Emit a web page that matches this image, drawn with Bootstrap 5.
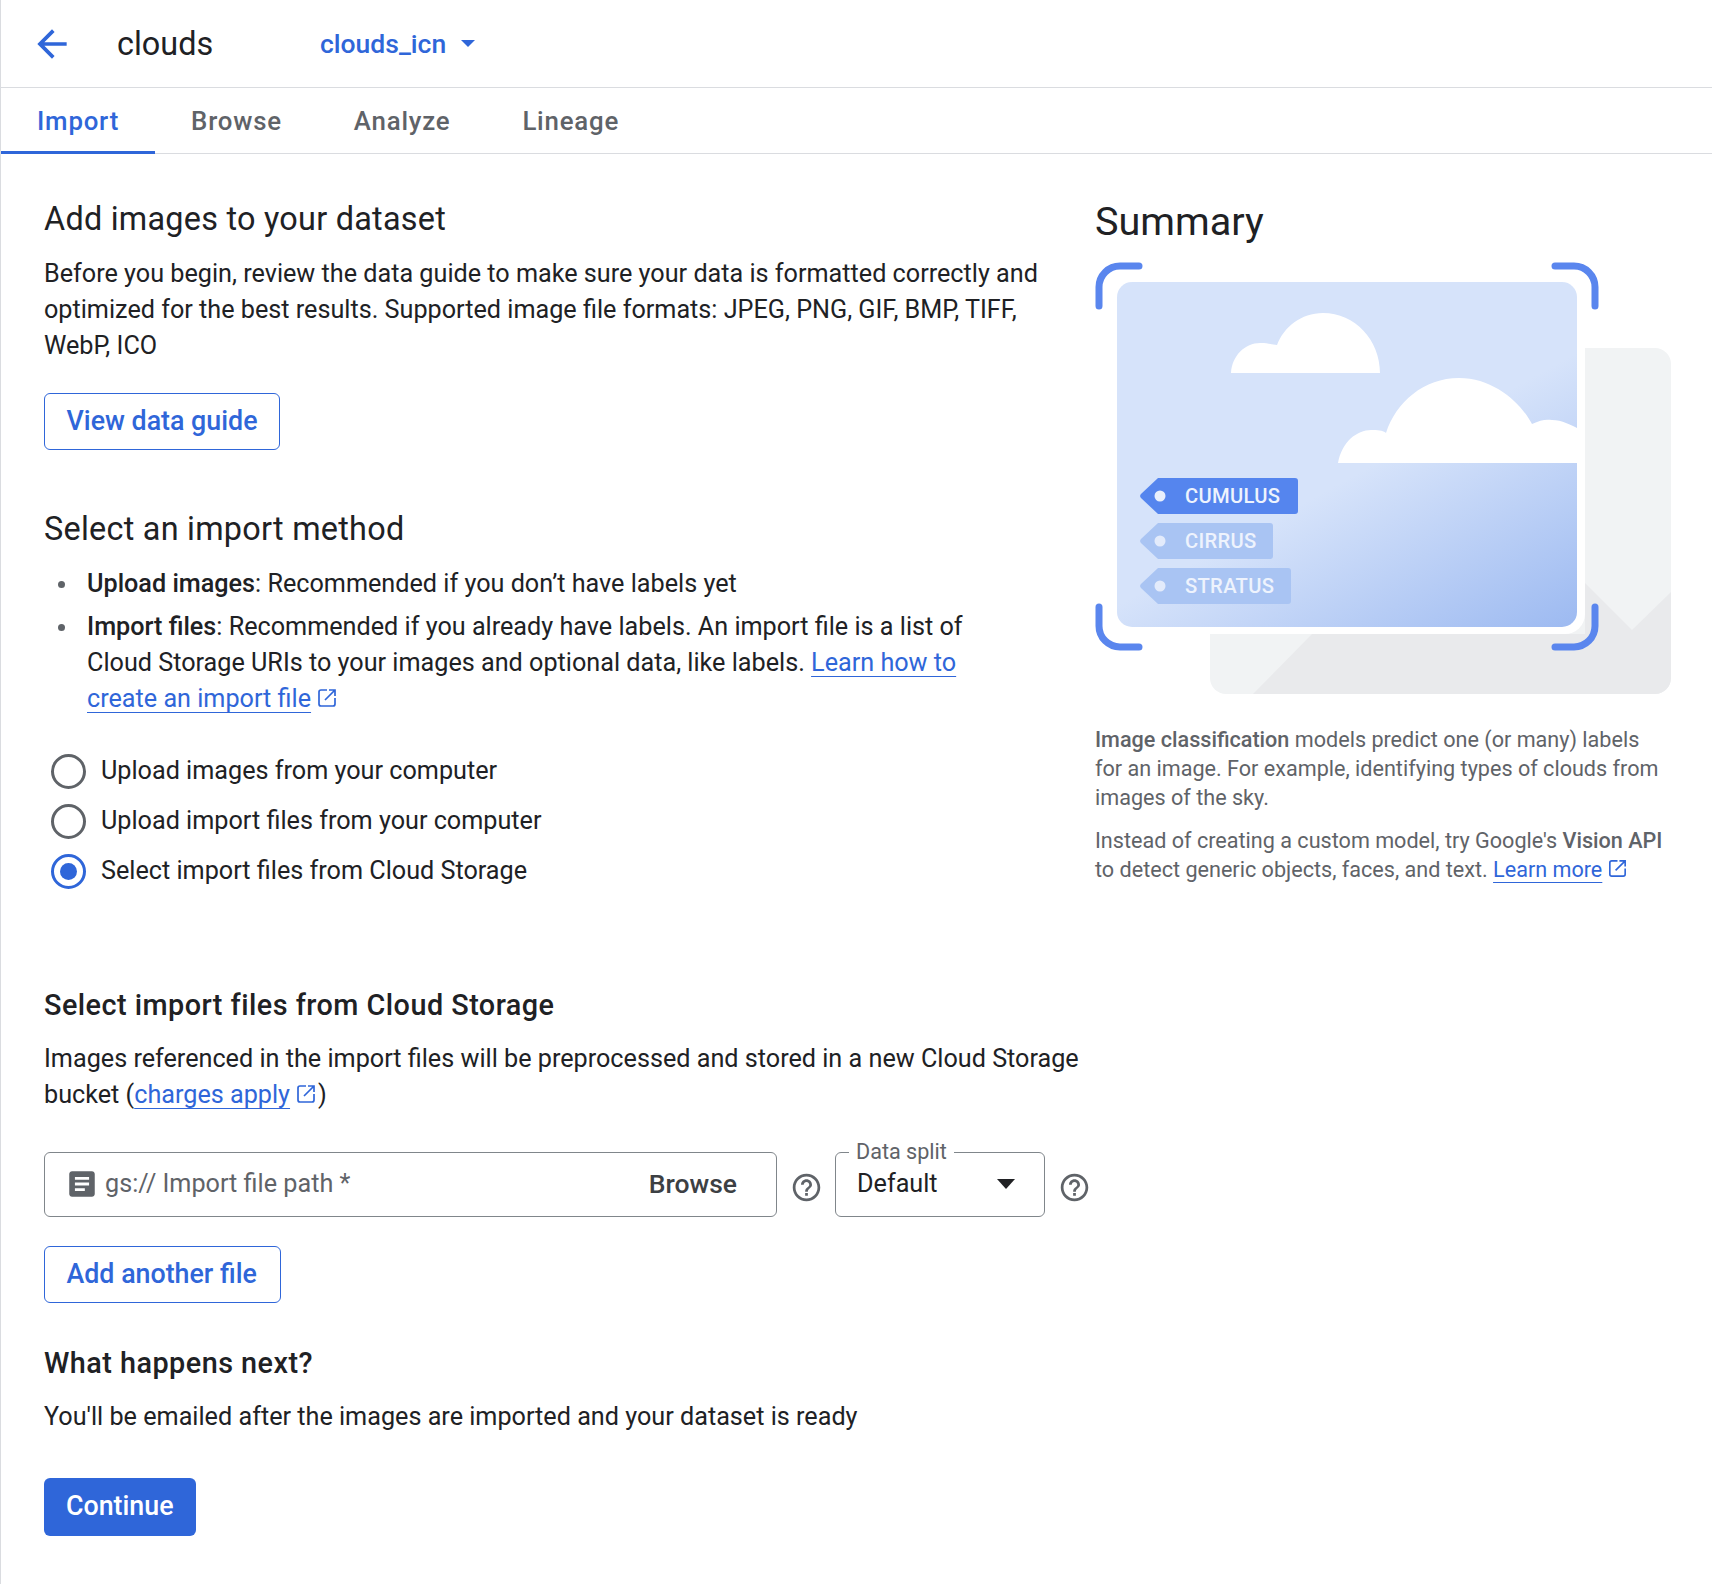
<!doctype html>
<html lang="en"><head><meta charset="utf-8"><title>clouds</title>
<link rel="stylesheet" href="https://cdn.jsdelivr.net/npm/bootstrap@5.3.0/dist/css/bootstrap.min.css">
<style>
body{font-family:Roboto,"Liberation Sans",sans-serif;font-size:25.2px;line-height:36px;color:#202124;background:#fff;margin:0}
.pg{border-left:1px solid #dadce0;min-height:1584px}
.hdr{height:88px;border-bottom:1px solid #dadce0;padding-left:36px}
.hdr-title{font-size:32.4px;margin-left:43px;width:203px;line-height:40px}
.hdr-link{color:#2f66d9;font-size:26.5px;font-weight:500}
.tabsbar{height:66px;border-bottom:1px solid #dadce0}
.tabx{display:block;padding:0 36px;height:66px;line-height:66px;color:#5f6368;font-size:25.8px;font-weight:500;text-decoration:none;letter-spacing:.8px;border-bottom:3px solid transparent;margin-bottom:-1px}
.tabx.on{color:#2f66d9;border-bottom-color:#2f66d9}
.wrap{padding:0 0 0 43px}
.lcol{width:1008px;padding-top:41px}
.rcol{margin-left:43px;width:580px;padding-top:40px}
h2.ttl{font-size:32.4px;line-height:48px;font-weight:400;margin:0;color:#202124;letter-spacing:.25px}
h3.ttl{font-size:28.8px;line-height:44px;font-weight:500;margin:0;color:#202124;letter-spacing:.47px}
.para{margin:0}
.btn-ol{display:inline-block;border:1px solid #2f66d9;color:#2f66d9;background:#fff;border-radius:6px;font-size:26.8px;font-weight:500;height:57px;line-height:55px;padding:0 21.5px;text-decoration:none}
.btn-fl{display:inline-block;background:#2f66d9;color:#fff;border-radius:6px;font-size:26.8px;font-weight:500;height:58px;line-height:56px;padding:0 22px;text-decoration:none}
.alink{color:#2f66d9;text-decoration:underline;text-underline-offset:5px;text-decoration-thickness:1px}
.ic{fill:none;stroke:currentColor;stroke-width:1.7;color:#2f66d9;vertical-align:-3px;margin-left:4px}
.blist{margin:0;padding:0 30px 0 43px;list-style:none}
.blist li{margin-bottom:7px;display:flex}
.blist li::before{content:"";flex:none;width:7px;height:7px;border-radius:50%;background:#5f6368;margin:15px 22px 0 -29px}
.rad{display:flex;align-items:center;height:50px;margin-left:7px}
.rad i{display:block;width:35px;height:35px;border:3px solid #5f6368;border-radius:50%;margin-right:15px;flex:none}
.rad i.sel{border-color:#2f66d9;position:relative}
.rad i.sel::after{content:"";position:absolute;left:6px;top:6px;width:17px;height:17px;border-radius:50%;background:#2f66d9}
.sumh{font-size:39.6px;line-height:56px;font-weight:400;margin:0}
.illus{display:block;margin-top:12px}
.rtxt{font-size:21.6px;line-height:28.8px;color:#5f6368;margin:0 0 15px;width:572px}
.rtxt b{font-weight:500}
.fld{height:65px;border:1px solid #80868b;border-radius:6px;position:relative}
.f1{width:733px;padding:0 39px 0 24px}
.f2{width:210px;padding:0 29px 0 21px}
.ph{color:#5f6368;margin-left:6px}
.brw{font-size:26.5px;font-weight:500;color:#3c4043}
.lgd{position:absolute;left:13px;top:-15px;background:#fff;padding:0 7px;font-size:21.6px;line-height:28px;color:#5f6368}
.hlp{color:#5f6368;fill:currentColor;flex:none}
.tri{width:0;height:0;border-left:9.5px solid transparent;border-right:9.5px solid transparent;border-top:10px solid #202124}
.tri2{width:0;height:0;border-left:7px solid transparent;border-right:7px solid transparent;border-top:7px solid #2f66d9;margin-left:15px}
</style></head><body>
<div class="pg">
<div class="hdr d-flex align-items-center">
<svg width="44" height="44" viewBox="0 0 24 24" style="color:#2f66d9;fill:currentColor;margin-left:-7px"><path d="M20 11H7.83l5.59-5.59L12 4l-8 8 8 8 1.41-1.41L7.83 13H20v-2z"/></svg>
<div class="hdr-title">clouds</div>
<a class="hdr-link d-flex align-items-center text-decoration-none">clouds_icn<span class="tri2"></span></a>
</div>
<div class="tabsbar d-flex">
<a class="tabx on">Import</a><a class="tabx">Browse</a><a class="tabx">Analyze</a><a class="tabx">Lineage</a>
</div>
<div class="wrap">
<div class="d-flex">
<div class="lcol">
<h2 class="ttl">Add images to your dataset</h2>
<p class="para" style="margin-top:13px">Before you begin, review the data guide to make sure your data is formatted correctly and optimized for the best results. Supported image file formats: JPEG, PNG, GIF, BMP, TIFF, WebP, ICO</p>
<a class="btn-ol" style="margin-top:29px">View data guide</a>
<h2 class="ttl" style="margin-top:55px">Select an import method</h2>
<ul class="blist" style="margin-top:13px">
<li><span><b style="font-weight:500">Upload images</b>: Recommended if you don’t have labels yet</span></li>
<li><span><b style="font-weight:500">Import files</b>: Recommended if you already have labels. An import file is a list of Cloud Storage URIs to your images and optional data, like labels. <a class="alink">Learn how to create an import file</a><svg class="ic" width="24" height="24" viewBox="0 0 24 24"><path d="M12 4H6a2 2 0 0 0-2 2v12a2 2 0 0 0 2 2h12a2 2 0 0 0 2-2v-6M14 4h6v6M20 4 10 14"/></svg></span></li>
</ul>
<div style="margin-top:29px">
<div class="rad"><i></i>Upload images from your computer</div>
<div class="rad"><i></i>Upload import files from your computer</div>
<div class="rad"><i class="sel"></i>Select import files from Cloud Storage</div>
</div>
</div>
<div class="rcol">
<h2 class="sumh">Summary</h2>
<svg class="illus" width="580" height="432" viewBox="1095 262 580 432">
<defs><linearGradient id="sky" x1="1400" y1="450" x2="1515" y2="659" gradientUnits="userSpaceOnUse"><stop offset="0" stop-color="#d6e3fa"/><stop offset="1" stop-color="#9dbaf1"/></linearGradient></defs>
<rect x="1210" y="348" width="461" height="346" rx="16" fill="#f1f3f4"/>
<path d="M1585 583 1632 630 1671 592V678a16 16 0 0 1-16 16H1253L1312 634H1585Z" fill="#e9eaec"/>
<rect x="1109" y="274" width="476" height="360" rx="20" fill="#fff"/>
<rect x="1117" y="282" width="460" height="345" rx="15" fill="url(#sky)"/>
<path d="M1231 373C1232 355 1246 342 1262 343 1265 343 1270 344 1277 345 1284 327 1301 313 1323 313 1355 313 1380 340 1380 373Z" fill="#fff"/>
<path d="M1338 463C1342 441 1358 429 1373 430 1380 430 1384 431 1386 433 1396 402 1424 378 1459 378 1494 378 1521 403 1532 424 1540 420 1546 419 1552 420 1562 420 1571 425 1577 428V463Z" fill="#fff"/>
<g fill="none" stroke="#5a86ee" stroke-width="7" stroke-linecap="round">
<path d="M1099 306V287a21 21 0 0 1 21-21H1139"/><path d="M1555 266H1574a21 21 0 0 1 21 21V306"/>
<path d="M1099 607V626a21 21 0 0 0 21 21H1139"/><path d="M1555 647H1574a21 21 0 0 0 21-21V607"/>
</g>
<path d="M1158 478H1295a3 3 0 0 1 3 3V511a3 3 0 0 1-3 3H1158L1141 498a3 3 0 0 1 0-4Z" fill="#5585ee"/>
<path d="M1158 523H1270a3 3 0 0 1 3 3V556a3 3 0 0 1-3 3H1158L1141 543a3 3 0 0 1 0-4Z" fill="#a9c4f3"/>
<path d="M1158 568H1288a3 3 0 0 1 3 3V601a3 3 0 0 1-3 3H1158L1141 588a3 3 0 0 1 0-4Z" fill="#a9c4f3"/>
<circle cx="1160" cy="496" r="5.5" fill="#e8effc"/><circle cx="1160" cy="541" r="5.5" fill="#e3ebfb"/><circle cx="1160" cy="586" r="5.5" fill="#e3ebfb"/>
<g font-family="Roboto,sans-serif" font-size="20.2" font-weight="500" fill="#eef3fd" letter-spacing=".3">
<text x="1185" y="503">CUMULUS</text><text x="1185" y="548">CIRRUS</text><text x="1185" y="593">STRATUS</text></g>
</svg>
<p class="rtxt" style="margin-top:32px"><b>Image classification</b> models predict one (or many) labels for an image. For example, identifying types of clouds from images of the sky.</p>
<p class="rtxt">Instead of creating a custom model, try Google's <b>Vision API</b> to detect generic objects, faces, and text. <a class="alink">Learn more</a><svg class="ic" width="23" height="23" viewBox="0 0 24 24"><path d="M12 4H6a2 2 0 0 0-2 2v12a2 2 0 0 0 2 2h12a2 2 0 0 0 2-2v-6M14 4h6v6M20 4 10 14"/></svg></p>
</div>
</div>
<div style="margin-top:83px">
<h3 class="ttl">Select import files from Cloud Storage</h3>
<p class="para" style="margin-top:14px;width:1050px">Images referenced in the import files will be preprocessed and stored in a new Cloud Storage bucket (<a class="alink">charges apply</a><svg class="ic" width="24" height="24" viewBox="0 0 24 24"><path d="M12 4H6a2 2 0 0 0-2 2v12a2 2 0 0 0 2 2h12a2 2 0 0 0 2-2v-6M14 4h6v6M20 4 10 14"/></svg>)</p>
<div class="d-flex align-items-center" style="margin-top:39px">
<div class="fld f1 d-flex align-items-center">
<svg width="34" height="34" viewBox="0 0 24 24" style="color:#5f6368;fill:currentColor;margin:0 0 0 -4px"><path d="M19 3H5c-1.1 0-2 .9-2 2v14c0 1.1.9 2 2 2h14c1.1 0 2-.9 2-2V5c0-1.1-.9-2-2-2zm-5 14H7v-2h7v2zm3-4H7v-2h10v2zm0-4H7V7h10v2z"/></svg>
<span class="ph">gs:// Import file path *</span>
<span class="brw ms-auto">Browse</span>
</div>
<svg class="hlp" width="33" height="33" viewBox="0 0 24 24" style="margin:7px 12px 0 13px"><path d="M11 18h2v-2h-2v2zm1-16C6.48 2 2 6.48 2 12s4.48 10 10 10 10-4.48 10-10S17.52 2 12 2zm0 18c-4.41 0-8-3.59-8-8s3.59-8 8-8 8 3.59 8 8-3.59 8-8 8zm0-14c-2.21 0-4 1.79-4 4h2c0-1.1.9-2 2-2s2 .9 2 2c0 2-3 1.75-3 5h2c0-2.25 3-2.5 3-5 0-2.21-1.79-4-4-4z"/></svg>
<div class="fld f2 d-flex align-items-center justify-content-between">
<span class="lgd">Data split</span>
<span>Default</span><span class="tri"></span>
</div>
<svg class="hlp" width="33" height="33" viewBox="0 0 24 24" style="margin:7px 0 0 13px"><path d="M11 18h2v-2h-2v2zm1-16C6.48 2 2 6.48 2 12s4.48 10 10 10 10-4.48 10-10S17.52 2 12 2zm0 18c-4.41 0-8-3.59-8-8s3.59-8 8-8 8 3.59 8 8-3.59 8-8 8zm0-14c-2.21 0-4 1.79-4 4h2c0-1.1.9-2 2-2s2 .9 2 2c0 2-3 1.75-3 5h2c0-2.25 3-2.5 3-5 0-2.21-1.79-4-4-4z"/></svg>
</div>
<a class="btn-ol" style="margin-top:29px;padding-right:23px">Add another file</a>
<h3 class="ttl" style="margin-top:38px">What happens next?</h3>
<p class="para" style="margin-top:14px">You'll be emailed after the images are imported and your dataset is ready</p>
<a class="btn-fl" style="margin-top:43px">Continue</a>
</div>
</div>
</div>
</body></html>
